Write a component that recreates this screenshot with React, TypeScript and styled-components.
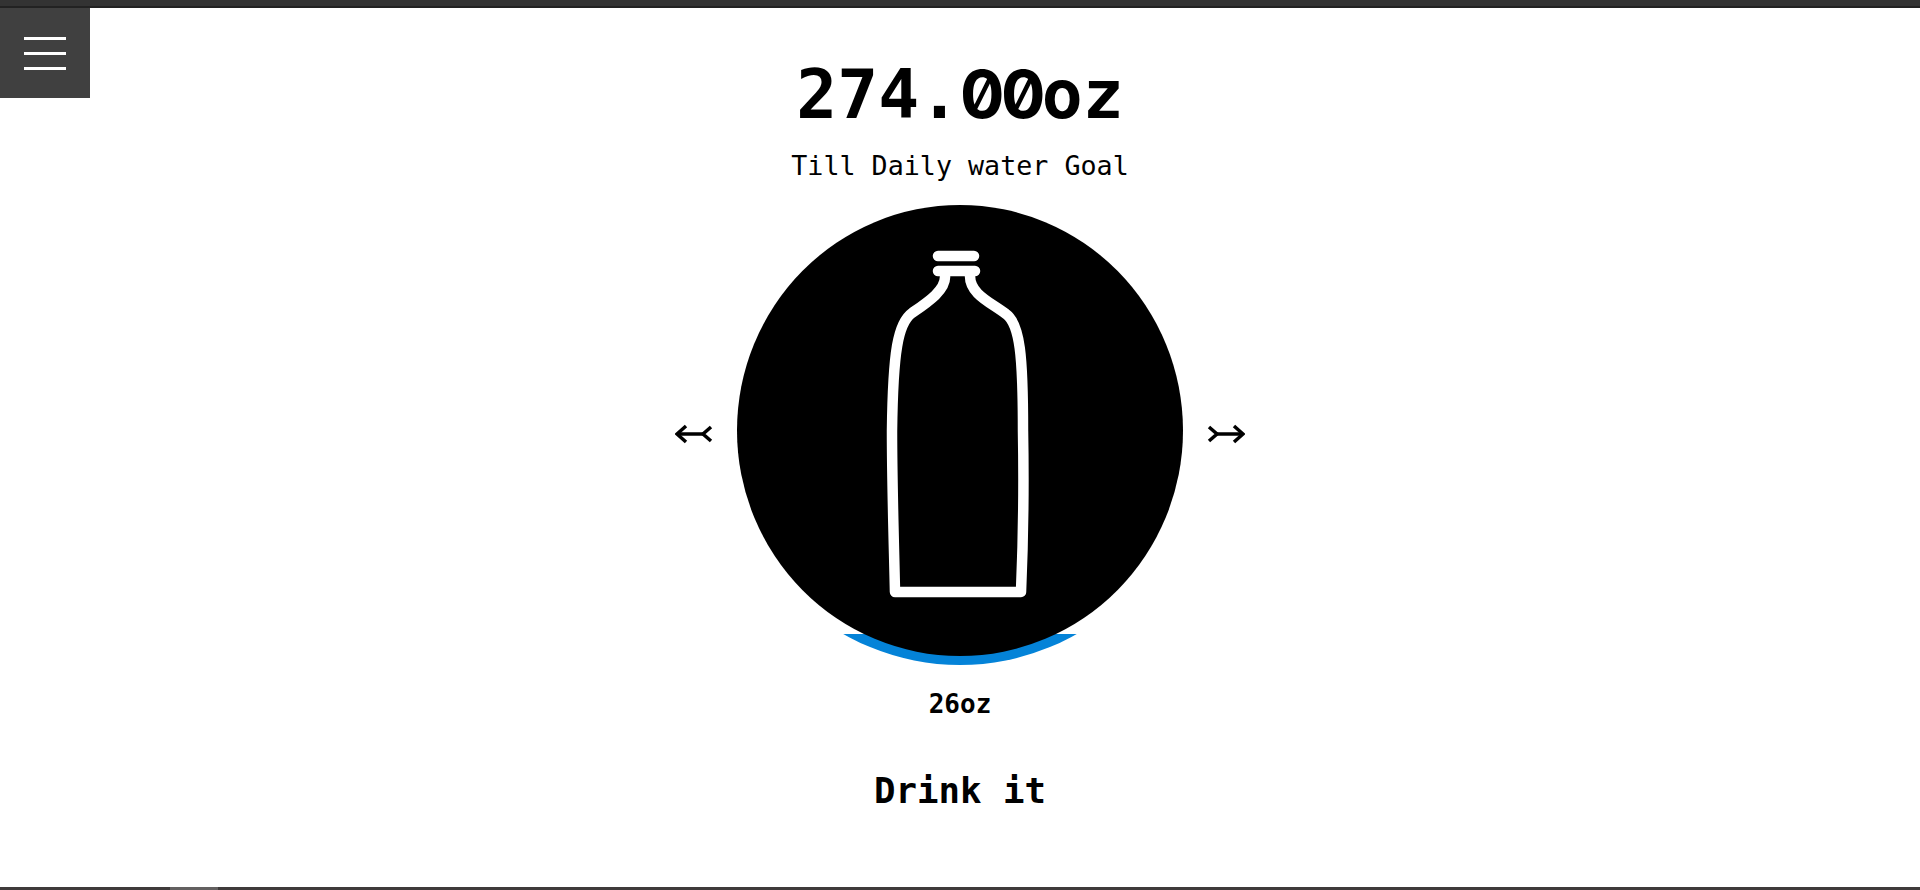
import styled, { createGlobalStyle } from 'styled-components';

const GlobalStyle = createGlobalStyle`
    html, body {
        margin: 0;
        height: 100%;
        background: #fff;
        overflow: hidden;
    }
`;

const Page = styled.div`
    height: 890px;
    display: flex;
    flex-direction: column;
    font-family: "DejaVu Sans Mono", "Liberation Mono", monospace;
    color: #000;
`;

const TopBar = styled.div`
    height: 8px;
    background: #333;
    border-bottom: 2px solid #222;
    box-sizing: border-box;
`;

const Main = styled.main`
    flex: 1;
    position: relative;
    display: flex;
    flex-direction: column;
    align-items: center;
`;

const MenuButton = styled.button`
    position: absolute;
    left: 0;
    top: 0;
    width: 90px;
    height: 90px;
    padding: 29px 24px 28px;
    border: 0;
    background: #404040;
    display: flex;
    flex-direction: column;
    justify-content: space-between;
    box-sizing: border-box;
`;

const MenuLine = styled.span`
    display: block;
    height: 3px;
    background: #fff;
`;

const Remaining = styled.h1`
    margin: 47px 0 0;
    font-size: 68px;
    line-height: 78px;
    font-weight: 700;
`;

const Zero = styled.span`
    display: inline-block;
    width: 40.9px;
    text-align: center;
    font-family: Inter, "DejaVu Sans Mono", monospace;
    font-size: 66px;
    font-variant-numeric: slashed-zero;
    font-feature-settings: "zero" 1;
`;

const Caption = styled.p`
    margin: 15px 0 0;
    font-size: 26.7px;
    line-height: 33px;
`;

const Carousel = styled.div`
    margin-top: 23px;
    display: flex;
    align-items: center;
    gap: 24px;
`;

const Arrow = styled.svg`
    width: 38px;
    height: 24px;
    margin-bottom: 2px;
`;

const Dial = styled.div`
    position: relative;
    width: 446px;
    height: 460px;
`;

const Fill = styled.div`
    position: absolute;
    left: -12px;
    right: -12px;
    top: -10px;
    bottom: 0;
    border-radius: 50%;
    overflow: hidden;
    display: flex;
    align-items: flex-end;
`;

const FillLevel = styled.div`
    width: 100%;
    background: #0483d8;
`;

const Disc = styled.div`
    position: absolute;
    left: 0;
    top: 0;
    width: 446px;
    height: 451px;
    border-radius: 50%;
    background: #000;
    display: flex;
    align-items: center;
    justify-content: center;
`;

const Bottle = styled.svg`
    width: 160px;
    height: 369px;
`;

const Amount = styled.div`
    margin-top: 24px;
    font-size: 26px;
    line-height: 30px;
    font-weight: 700;
`;

const DrinkButton = styled.button`
    margin-top: 50px;
    border: 0;
    padding: 0;
    background: none;
    color: #000;
    font-family: inherit;
    font-size: 35.7px;
    line-height: 44px;
    font-weight: 700;
`;

const BottomBar = styled.div`
    height: 3px;
    background: #3f3b3b;
    display: flex;
`;

const BottomTab = styled.div`
    margin-left: 170px;
    width: 48px;
    background: #636060;
`;

function LeftArrow() {
    return (
        <Arrow viewBox="0 0 38 24" fill="none" stroke="#000" strokeWidth="3.5">
            <path d="M11 4 L2 12 L11 20" />
            <path d="M2 12 H28" />
            <path d="M36 5 L28 12 L36 19" />
        </Arrow>
    );
}

function RightArrow() {
    return (
        <Arrow viewBox="0 0 38 24" fill="none" stroke="#000" strokeWidth="3.5">
            <path d="M2 5 L10 12 L2 19" />
            <path d="M10 12 H36" />
            <path d="M27 4 L36 12 L27 20" />
        </Arrow>
    );
}

export default function App() {
    return (
        <>
            <GlobalStyle />
            <Page>
                <TopBar />
                <Main>
                    <MenuButton aria-label="Menu">
                        <MenuLine />
                        <MenuLine />
                        <MenuLine />
                    </MenuButton>
                    <Remaining>274.<Zero>0</Zero><Zero>0</Zero>oz</Remaining>
                    <Caption>Till Daily water Goal</Caption>
                    <Carousel>
                        <LeftArrow />
                        <Dial>
                            <Fill>
                                <FillLevel style={{ height: `${(26 / 300) * 100 * 0.77}%` }} />
                            </Fill>
                            <Disc>
                                <Bottle viewBox="0 0 160 369" fill="none" stroke="#fff" strokeWidth="10.5" strokeLinecap="round" strokeLinejoin="round">
                                    <path d="M58 10 H94" />
                                    <path d="M58 25 H95" />
                                    <path d="M65 30 C66 44 48 56 32 67 C18 77 13 105 12 185 C12 240 14 300 15 346 H141 C143 300 144 240 143 185 C143 110 140 78 126 68 C110 56 90 48 90 30" />
                                </Bottle>
                            </Disc>
                        </Dial>
                        <RightArrow />
                    </Carousel>
                    <Amount>26oz</Amount>
                    <DrinkButton>Drink it</DrinkButton>
                </Main>
                <BottomBar>
                    <BottomTab />
                </BottomBar>
            </Page>
        </>
    );
}
